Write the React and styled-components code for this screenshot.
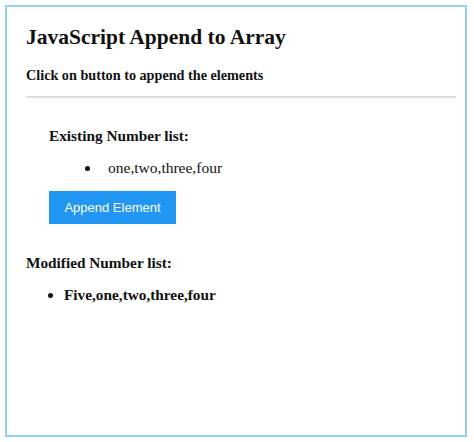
import React from 'react';
import styled, { createGlobalStyle } from 'styled-components';

const Global = createGlobalStyle`
  html, body {
    margin: 0;
    padding: 0;
    background: #ffffff;
  }
  body {
    font-family: 'Liberation Serif', 'Times New Roman', serif;
    color: #111111;
  }
`;

const Page = styled.div`
  padding: 5px 7px 5px 5px;
`;

const Frame = styled.div`
  box-sizing: border-box;
  height: 432px;
  border: 2px solid #93d0ea;
  padding: 17px 9px 0 19px;
`;

const Title = styled.h2`
  margin: 0;
  font-size: 21.5px;
  font-weight: bold;
  line-height: 26px;
`;

const Subtitle = styled.h4`
  margin: 16px 0 0;
  font-size: 14.2px;
  font-weight: bold;
  line-height: 18px;
`;

const Rule = styled.hr`
  margin: 12px 0 0;
  border: 0;
  border-top: 2px solid #dcdcdc;
`;

const Section = styled.div`
  padding-left: ${(p) => p.$indent || 0}px;
  margin-top: ${(p) => p.$top || 0}px;
`;

const Label = styled.h4`
  margin: 0;
  font-size: 15.3px;
  font-weight: bold;
  line-height: 19px;
`;

const List = styled.ul`
  margin: ${(p) => p.$top}px 0 0;
  padding-left: ${(p) => p.$pad}px;
  font-size: ${(p) => (p.$bold ? 15.3 : 15.5)}px;
  line-height: 19px;
  font-weight: ${(p) => (p.$bold ? 'bold' : 'normal')};

  li {
    padding-left: ${(p) => p.$gap}px;
  }
`;

const Button = styled.button`
  display: block;
  margin-top: 14px;
  width: 127px;
  height: 33px;
  padding: 0;
  border: 0;
  background: #2196f3;
  color: #ffffff;
  font-family: 'Liberation Sans', Arial, sans-serif;
  font-size: 13px;
  cursor: pointer;
`;

export default function App() {
  return (
    <Page>
      <Global />
      <Frame>
        <Title>JavaScript Append to Array</Title>
        <Subtitle>Click on button to append the elements</Subtitle>
        <Rule />
        <Section $indent={23} $top={28}>
          <Label>Existing Number list:</Label>
          <List $top={13} $pad={52} $gap={7}>
            <li>one,two,three,four</li>
          </List>
          <Button>Append Element</Button>
        </Section>
        <Section $top={29}>
          <Label>Modified Number list:</Label>
          <List $top={13} $pad={38} $gap={0} $bold>
            <li>Five,one,two,three,four</li>
          </List>
        </Section>
      </Frame>
    </Page>
  );
}
